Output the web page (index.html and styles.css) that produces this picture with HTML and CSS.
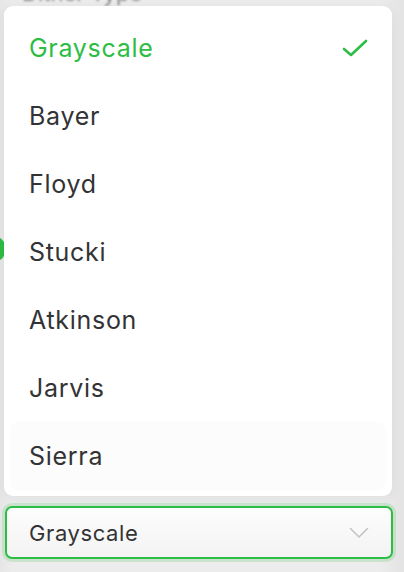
FILE: index.html
```html
<!DOCTYPE html>
<html>
<head>
<meta charset="utf-8">
<link rel="stylesheet" href="styles.css">
</head>
<body>
<div class="screen">
  <div class="behind-label">Dither Type</div>
  <div class="behind-dot"></div>
  <div class="menu">
    <div class="item selected"><span>Grayscale</span>
      <svg class="check" width="26" height="20" viewBox="0 0 26 20"><path d="M2 11 L9 17 L24 3" fill="none" stroke="#2dbd45" stroke-width="2.6" stroke-linecap="round" stroke-linejoin="round"/></svg>
    </div>
    <div class="item"><span>Bayer</span></div>
    <div class="item"><span>Floyd</span></div>
    <div class="item"><span>Stucki</span></div>
    <div class="item"><span>Atkinson</span></div>
    <div class="item"><span>Jarvis</span></div>
    <div class="item hover"><span>Sierra</span></div>
  </div>
  <div class="select">
    <span>Grayscale</span>
    <svg class="chev" width="20" height="12" viewBox="0 0 20 12"><path d="M1.5 1.5 L10 10 L18.5 1.5" fill="none" stroke="#c4c4c4" stroke-width="1.6" stroke-linecap="round" stroke-linejoin="round"/></svg>
  </div>
</div>
</body>
</html>
```
FILE: styles.css
```css
html, body {
  margin: 0;
  padding: 0;
}
body {
  width: 404px;
  height: 572px;
  overflow: hidden;
  background: #ebebeb;
  font-family: Inter, "Noto Sans", sans-serif;
}
.screen {
  position: relative;
  width: 404px;
  height: 572px;
  background: linear-gradient(90deg, #e6e6e6 0px, #ececec 12px, #ececec 380px, #e3e3e3 404px);
  display: flex;
  flex-direction: column;
  padding: 6px 12px 0 4px;
  box-sizing: border-box;
}
.behind-label {
  position: absolute;
  left: 22px;
  top: -20px;
  font-size: 22px;
  line-height: 26px;
  color: #8a8a8e;
  filter: blur(0.8px);
}
.behind-dot {
  position: absolute;
  left: -20px;
  top: 236px;
  width: 26px;
  height: 26px;
  border-radius: 50%;
  background: #2dbd45;
}
.menu {
  position: relative;
  background: #fff;
  border-radius: 9px;
  padding: 8px 6px 6px 6px;
  box-shadow: 0 2px 12px rgba(0,0,0,0.06);
  display: flex;
  flex-direction: column;
}
.item {
  height: 68px;
  display: flex;
  align-items: center;
  justify-content: space-between;
  padding: 0 18px 0 19px;
  font-size: 25px;
  font-weight: 400;
  color: #333336;
  letter-spacing: 0.7px;
  border-radius: 8px;
}
.item.selected {
  color: #2dbd45;
}
.item.hover {
  background: #fcfcfc;
}
.check {
  margin-top: -1px;
}
.select {
  margin-top: 10px;
  margin-left: 1px;
  margin-right: -1px;
  height: 53px;
  box-sizing: border-box;
  border: 2px solid #2dbd45;
  border-radius: 7px;
  box-shadow: 0 0 0 3px rgba(45,189,69,0.18);
  background: linear-gradient(180deg, #fdfdfd 0%, #f3f3f3 100%);
  display: flex;
  align-items: center;
  justify-content: space-between;
  padding: 0 22px 0 22px;
  font-size: 22px;
  letter-spacing: 0.6px;
  color: #333336;
}
```
